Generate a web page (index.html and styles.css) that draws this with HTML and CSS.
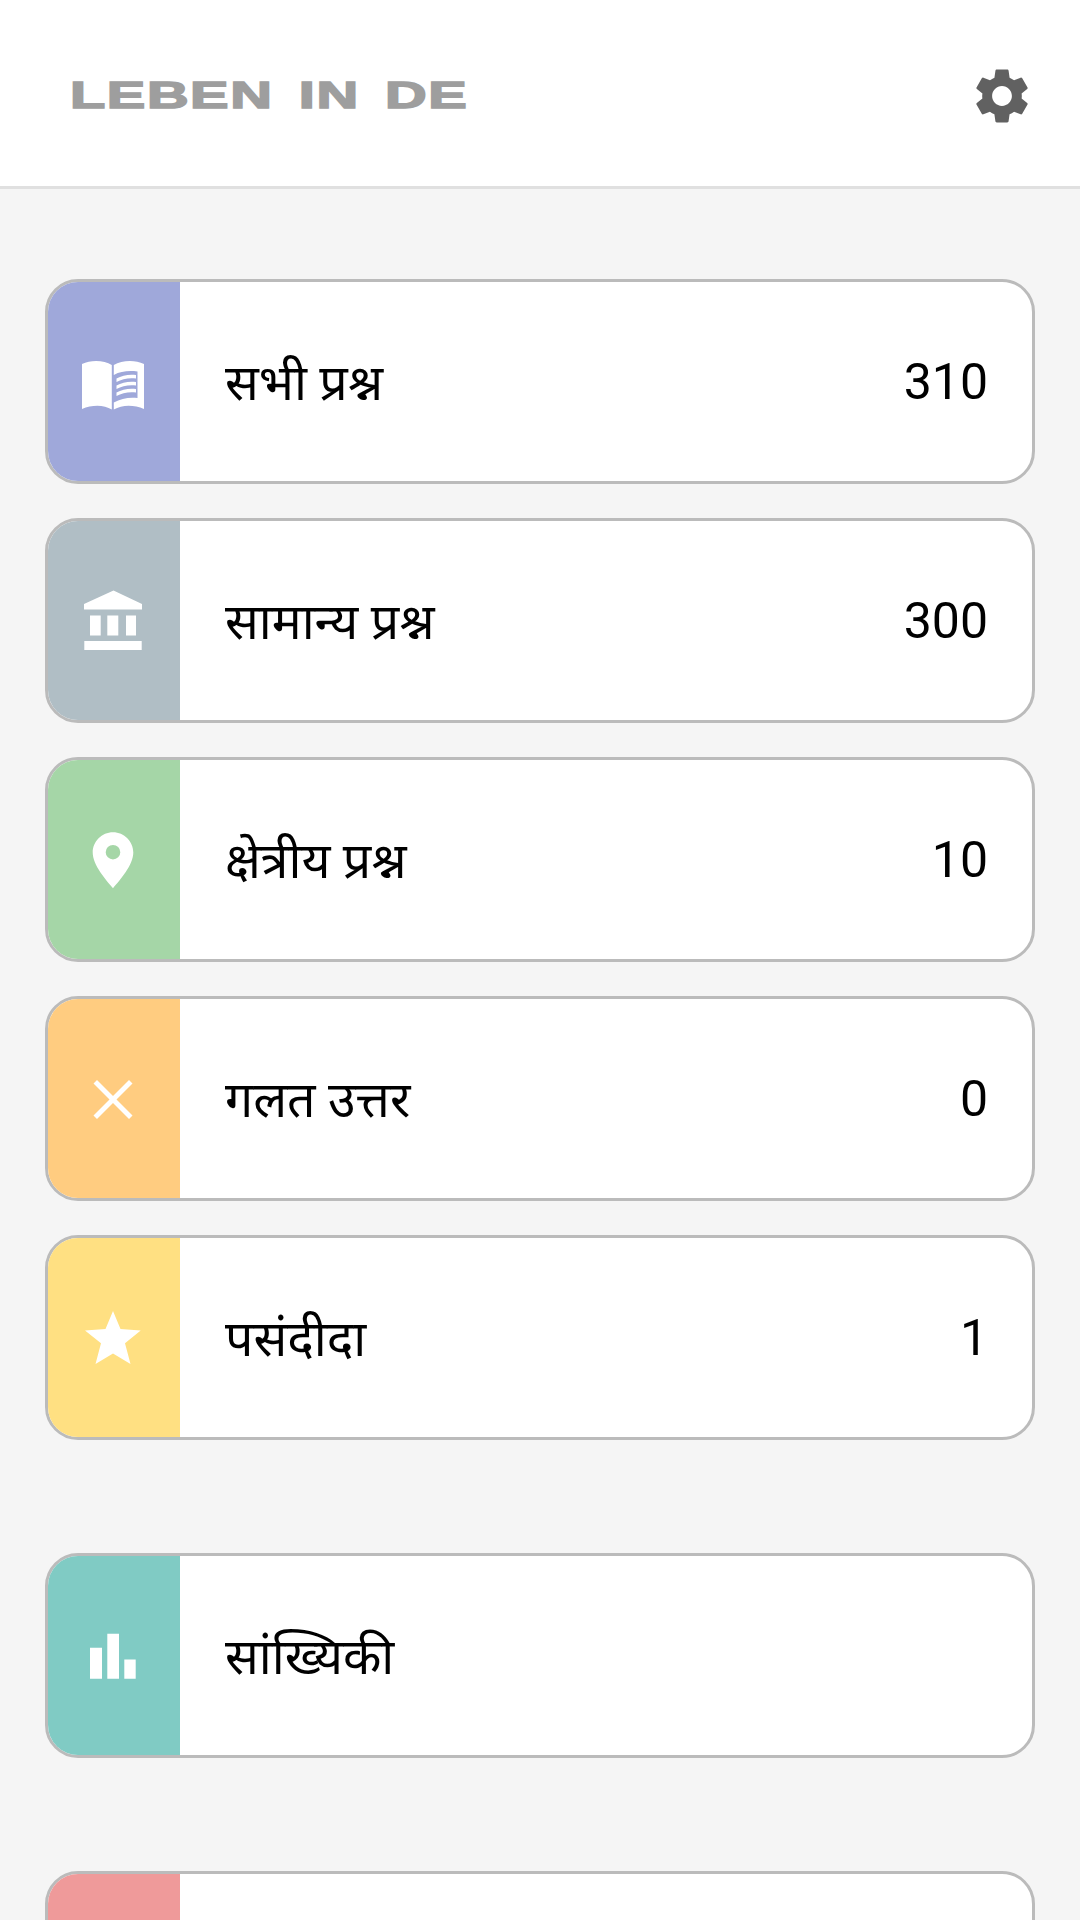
FILE: index.html
```html
<!DOCTYPE html>
<html lang="hi">
<head>
    <meta charset="UTF-8">
    <meta name="viewport" content="width=device-width, initial-scale=1.0">
    <title>Leben in DE</title>
    <link rel="stylesheet" href="styles.css">
</head>
<body>

    <header class="header">
        <div class="logo"><span class="logo-text">LEBEN IN DE</span></div>
        <svg class="gear" viewBox="0 0 24 24"><path d="M19.14,12.94c0.04-0.3,0.06-0.61,0.06-0.94c0-0.32-0.02-0.64-0.07-0.94l2.03-1.58c0.18-0.14,0.23-0.41,0.12-0.61l-1.92-3.32c-0.12-0.22-0.37-0.29-0.59-0.22l-2.39,0.96c-0.5-0.38-1.03-0.7-1.62-0.94L14.4,2.81c-0.04-0.24-0.24-0.41-0.48-0.41h-3.84c-0.24,0-0.43,0.17-0.47,0.41L9.25,5.35C8.66,5.59,8.12,5.92,7.63,6.29L5.24,5.33c-0.22-0.08-0.47,0-0.59,0.22L2.74,8.87C2.62,9.08,2.66,9.34,2.86,9.48l2.03,1.58C4.84,11.36,4.8,11.69,4.8,12s0.02,0.64,0.07,0.94l-2.03,1.58c-0.18,0.14-0.23,0.41-0.12,0.61l1.92,3.32c0.12,0.22,0.37,0.29,0.59,0.22l2.39-0.96c0.5,0.38,1.03,0.7,1.62,0.94l0.36,2.54c0.05,0.24,0.24,0.41,0.48,0.41h3.84c0.24,0,0.44-0.17,0.47-0.41l0.36-2.54c0.59-0.24,1.13-0.56,1.62-0.94l2.39,0.96c0.22,0.08,0.47,0,0.59-0.22l1.92-3.32c0.12-0.22,0.07-0.47-0.12-0.61L19.14,12.94z M12,15.6c-1.98,0-3.6-1.62-3.6-3.6s1.62-3.6,3.6-3.6s3.6,1.62,3.6,3.6S13.98,15.6,12,15.6z"/></svg>
    </header>

    <main class="content">
        <!-- Question lists -->
        <section class="group">
            <div class="card">
                <div class="card-icon indigo">
                    <svg class="icon" viewBox="0 0 80 80"><path fill-rule="evenodd" d="M8 22C17 17.500 30 18 37.800 23V67.500C30 62.500 18 62.500 8 67ZM39.800 23C48 18 61 17.500 70 22V67C60 62.500 48 62.500 39.800 67.500ZM39.800 33V60.500C47 56.500 55 55 63.500 56V29.500C55 28.500 47 29 39.800 33Z"/><path d="M42.500 36.500C48 33.500 55 32 62 33V36.500C55 35.500 48 37 42.500 40ZM42.500 43.500C48 40.500 55 39 62 40V43.500C55 42.500 48 44 42.500 47ZM42.500 50.500C48 47.500 55 46 62 47V50.500C55 49.500 48 51 42.500 54Z"/></svg>
                </div>
                <div class="card-label">सभी प्रश्न</div>
                <div class="card-count">310</div>
            </div>
            <div class="card">
                <div class="card-icon bluegrey">
                    <svg class="icon" viewBox="0 0 80 80"><path d="M39.500 9.500L68 23V28.500H10V23ZM16 34.500H26.700V54.500H16ZM33.300 34.500H44.300V54.500H33.300ZM52 34.500H62V54.500H52ZM10.300 60H67.700V69H10.300Z"/></svg>
                </div>
                <div class="card-label">सामान्य प्रश्न</div>
                <div class="card-count">300</div>
            </div>
            <div class="card">
                <div class="card-icon green">
                    <svg class="icon" viewBox="0 0 80 80"><path fill-rule="evenodd" d="M39 12.200C50.200 12.200 59.300 21.300 59.300 32.500C59.300 45 46 60 39 68.200C32 60 18.700 45 18.700 32.500C18.700 21.300 27.800 12.200 39 12.200ZM39 24.900A7.300 7.300 0 1 0 39 39.500A7.300 7.300 0 1 0 39 24.900Z"/></svg>
                </div>
                <div class="card-label">क्षेत्रीय प्रश्न</div>
                <div class="card-count">10</div>
            </div>
            <div class="card">
                <div class="card-icon orange">
                    <svg class="icon" viewBox="0 0 80 80"><path d="M23 21L39 37L55 21L58.500 24.500L42.500 40.500L58.500 56.500L55 60L39 44L23 60L19.500 56.500L35.500 40.500L19.500 24.500Z"/></svg>
                </div>
                <div class="card-label">गलत उत्तर</div>
                <div class="card-count">0</div>
            </div>
            <div class="card">
                <div class="card-icon amber">
                    <svg class="icon" viewBox="0 0 80 80"><path d="M39 13L46.500 31L66.700 32.500L51 45.300L56.500 66L39 55.500L21.500 66L27 45.300L11 32.500L31.500 31Z"/></svg>
                </div>
                <div class="card-label">पसंदीदा</div>
                <div class="card-count">1</div>
            </div>
        </section>

        <section class="group">
            <div class="card">
                <div class="card-icon teal">
                    <svg class="icon" viewBox="0 0 80 80"><path d="M16 31.800H28V62.800H16ZM33.300 17.800H45V62.800H33.300ZM50.300 43.500H61.700V62.800H50.300Z"/></svg>
                </div>
                <div class="card-label">सांख्यिकी</div>
            </div>
        </section>

        <section class="group">
            <div class="card">
                <div class="card-icon red"></div>
            </div>
        </section>
    </main>

</body>
</html>
```

FILE: styles.css
```css
html, body {
    margin: 0;
    height: 1920px;
    overflow: hidden;
}

body {
    background-color: #f5f5f5;
    font-family: Roboto, "Noto Sans", "Noto Sans Devanagari", sans-serif;
    color: #000;
}

.header {
    box-sizing: border-box;
    height: 189px;
    display: flex;
    justify-content: space-between;
    align-items: center;
    padding: 5px 45px 0 70px;
    background-color: #fff;
    border-bottom: 3px solid #e0e0e0;
}

.logo {
    width: 396px;
}

.logo-text {
    display: inline-block;
    font-family: "Liberation Sans", Arial, sans-serif;
    font-size: 37px;
    font-weight: bold;
    letter-spacing: 1px;
    word-spacing: 5px;
    color: #9e9e9e;
    -webkit-text-stroke: 1.5px #9e9e9e;
    white-space: nowrap;
    transform: scaleX(1.56);
    transform-origin: left center;
}

.gear {
    width: 66px;
    height: 66px;
    fill: #616161;
}

.content {
    padding: 90px 45px 0;
}

.group {
    display: flex;
    flex-direction: column;
    gap: 34px;
    margin-bottom: 113px;
}

.card {
    box-sizing: border-box;
    flex: none;
    height: 205px;
    display: flex;
    align-items: center;
    overflow: hidden;
    background-color: #fff;
    border: 3px solid #bbb;
    border-radius: 33px;
}

.card-icon {
    flex: none;
    align-self: stretch;
    width: 132px;
    display: flex;
    justify-content: center;
    align-items: center;
}

.icon {
    width: 80px;
    height: 80px;
    fill: #fff;
}

.card-label {
    flex: 1;
    padding-left: 45px;
    padding-bottom: 2px;
    font-size: 50px;
}

.card-count {
    padding-right: 44px;
    font-size: 50px;
}

.indigo { background-color: #9fa8da; }
.bluegrey { background-color: #b0bec5; }
.green { background-color: #a5d6a7; }
.orange { background-color: #ffcc80; }
.amber { background-color: #ffe082; }
.teal { background-color: #80cbc4; }
.red { background-color: #ef9a9a; }
```
